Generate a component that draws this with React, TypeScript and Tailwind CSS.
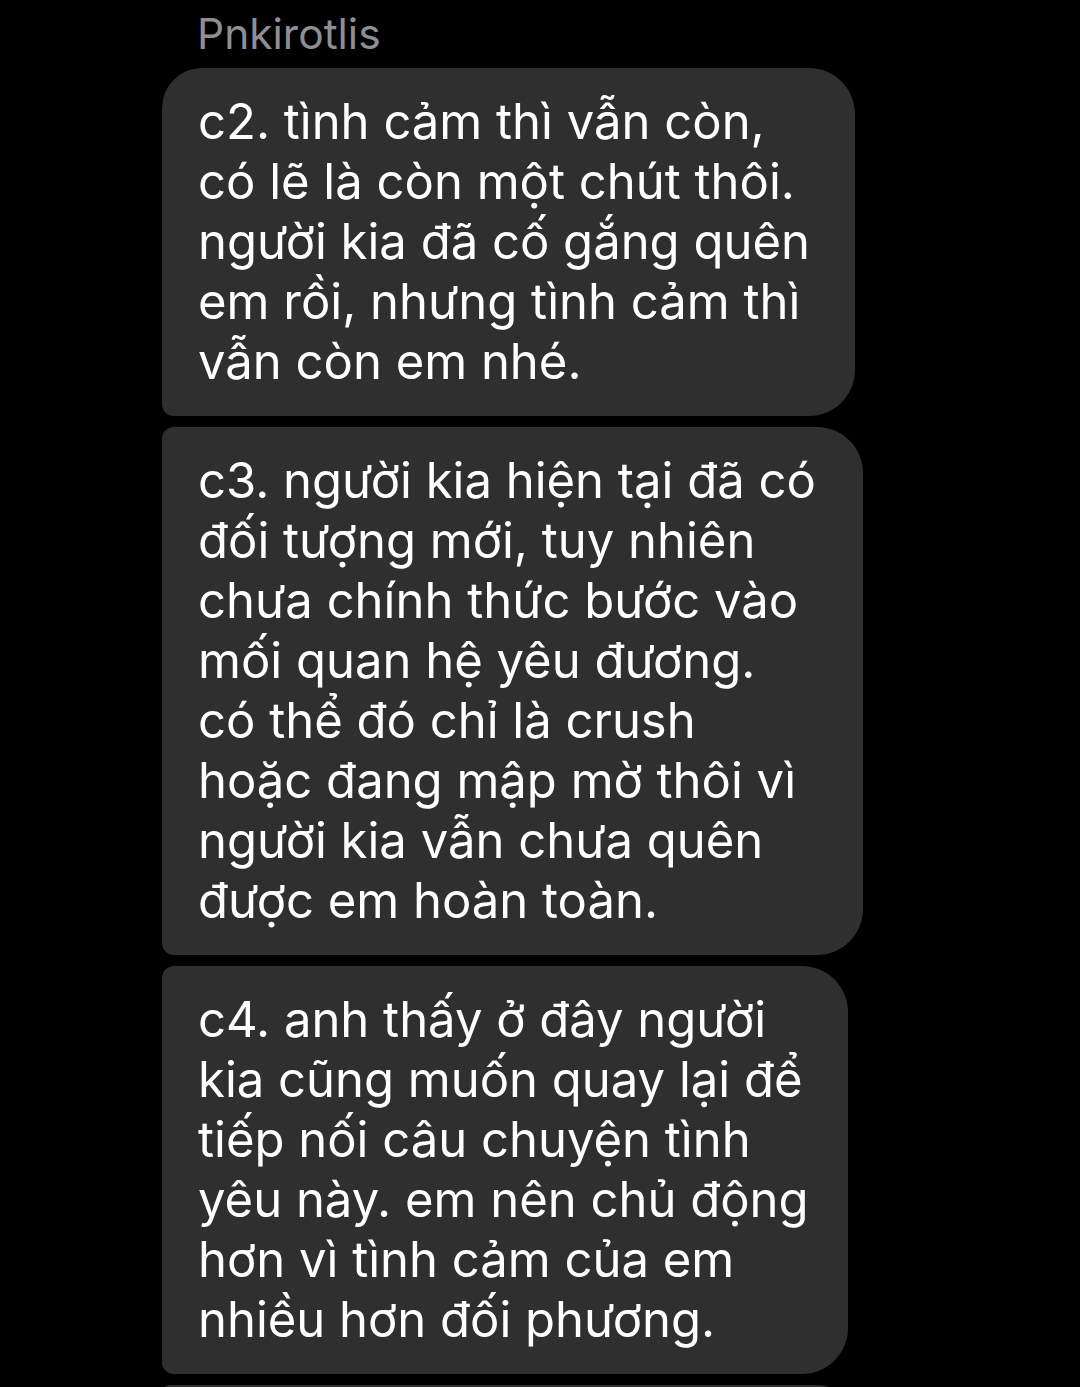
const MESSAGES = [
  {
    width: 'w-[693px]',
    corners: 'rounded-tl-[40px] rounded-bl-[12px]',
    lines: [
      'c2. tình cảm thì vẫn còn,',
      'có lẽ là còn một chút thôi.',
      'người kia đã cố gắng quên',
      'em rồi, nhưng tình cảm thì',
      'vẫn còn em nhé.',
    ],
  },
  {
    width: 'w-[701px]',
    corners: 'rounded-tl-[12px] rounded-bl-[12px]',
    lines: [
      'c3. người kia hiện tại đã có',
      'đối tượng mới, tuy nhiên',
      'chưa chính thức bước vào',
      'mối quan hệ yêu đương.',
      'có thể đó chỉ là crush',
      'hoặc đang mập mờ thôi vì',
      'người kia vẫn chưa quên',
      'được em hoàn toàn.',
    ],
  },
  {
    width: 'w-[686px]',
    corners: 'rounded-tl-[12px] rounded-bl-[12px]',
    lines: [
      'c4. anh thấy ở đây người',
      'kia cũng muốn quay lại để',
      'tiếp nối câu chuyện tình',
      'yêu này. em nên chủ động',
      'hơn vì tình cảm của em',
      'nhiều hơn đối phương.',
    ],
  },
];

export default function App() {
  return (
    <div
      className="h-[1387px] w-[1080px] overflow-hidden bg-black"
      style={{ fontFamily: 'Inter, "Noto Sans", sans-serif' }}
    >
      <div className="pl-[197px] pt-[8px] text-[42.5px] leading-[52px] text-[#8e8e93]">Pnkirotlis</div>

      <div className="mt-[8px] flex flex-col gap-[11px] pl-[162px]">
        {MESSAGES.map((m, i) => (
          <div
            key={i}
            className={`${m.width} ${m.corners} rounded-r-[46px] bg-[#2f2f2f] py-[24px] pl-[36px] text-[49px] leading-[60px] text-white`}
          >
            {m.lines.map((l, j) => (
              <div key={j} className="whitespace-nowrap">{l}</div>
            ))}
          </div>
        ))}
        <div className="h-[60px] w-[686px] rounded-l-[12px] rounded-r-[46px] bg-[#2f2f2f]" />
      </div>
    </div>
  );
}
